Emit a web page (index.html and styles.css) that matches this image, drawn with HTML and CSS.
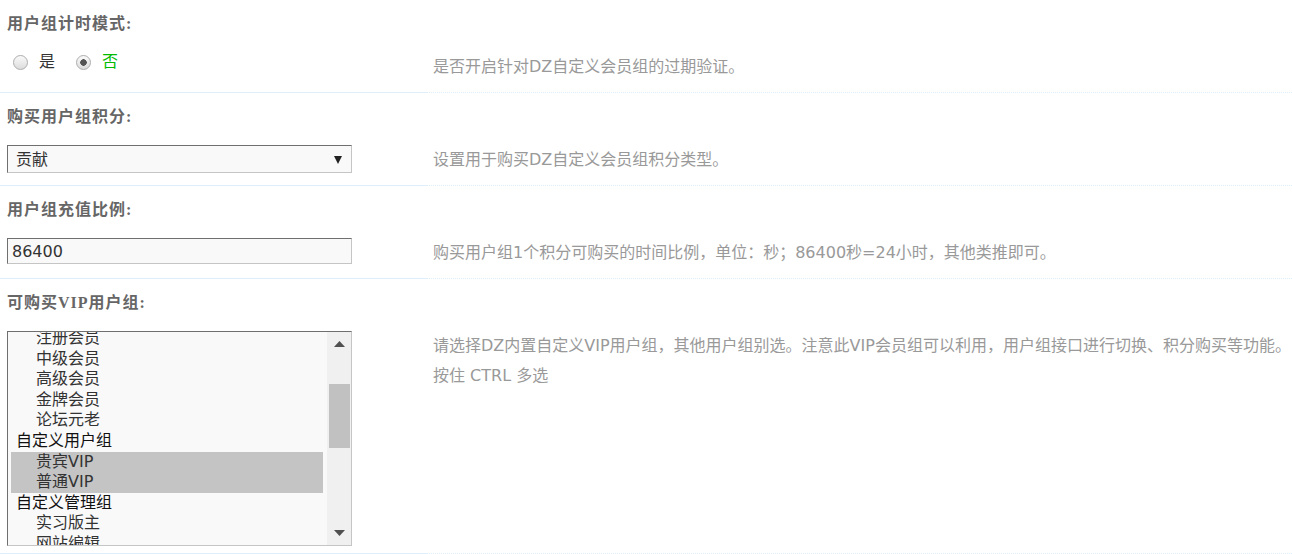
FILE: index.html
```html
<html>
	<head>
		<meta charset="utf-8">
		<link rel="stylesheet" href="styles.css">
	</head>
	<body>
		<form class="settings" method="POST">
			<div class="setting">
				<div class="setting-title">用户组计时模式:</div>
				<div class="setting-row">
					<div class="setting-value">
						<div class="radio-group">
							<label class="radio"><input type="radio" name="timeMode" value="1"/>是</label>
							<label class="radio checked"><input type="radio" name="timeMode" value="0" checked/>否</label>
						</div>
					</div>
					<div class="setting-tip">是否开启针对DZ自定义会员组的过期验证。</div>
				</div>
			</div>
			<div class="setting">
				<div class="setting-title">购买用户组积分:</div>
				<div class="setting-row">
					<div class="setting-value">
						<div class="select-wrap">
							<select name="credit">
								<option>贡献</option>
								<option>威望</option>
								<option>金钱</option>
							</select>
							<svg class="select-arrow" width="8" height="8" viewBox="0 0 8 8"><polygon points="0,0 8,0 4,8" fill="#222"/></svg>
						</div>
					</div>
					<div class="setting-tip">设置用于购买DZ自定义会员组积分类型。</div>
				</div>
			</div>
			<div class="setting">
				<div class="setting-title">用户组充值比例:</div>
				<div class="setting-row">
					<div class="setting-value">
						<input class="textbox" type="text" name="ratio" value="86400"/>
					</div>
					<div class="setting-tip">购买用户组1个积分可购买的时间比例，单位：秒；86400秒=24小时，其他类推即可。</div>
				</div>
			</div>
			<div class="setting">
				<div class="setting-title">可购买VIP用户组:</div>
				<div class="setting-row">
					<div class="setting-value">
						<div class="listbox">
							<div class="listbox-items">
								<div class="opt">注册会员</div>
								<div class="opt">中级会员</div>
								<div class="opt">高级会员</div>
								<div class="opt">金牌会员</div>
								<div class="opt">论坛元老</div>
								<div class="optgroup">自定义用户组</div>
								<div class="opt selected">贵宾VIP</div>
								<div class="opt selected">普通VIP</div>
								<div class="optgroup">自定义管理组</div>
								<div class="opt">实习版主</div>
								<div class="opt">网站编辑</div>
							</div>
							<div class="scrollbar">
								<div class="sb-btn"><svg width="11" height="6" viewBox="0 0 11 6"><polygon points="0,6 11,6 5.5,0" fill="#505050"/></svg></div>
								<div class="sb-track"><div class="sb-thumb"></div></div>
								<div class="sb-btn"><svg width="11" height="6" viewBox="0 0 11 6"><polygon points="0,0 11,0 5.5,6" fill="#505050"/></svg></div>
							</div>
						</div>
					</div>
					<div class="setting-tip">请选择DZ内置自定义VIP用户组，其他用户组别选。注意此VIP会员组可以利用，用户组接口进行切换、积分购买等功能。<br>按住 CTRL 多选</div>
				</div>
			</div>
		</form>
	</body>
</html>
```

FILE: styles.css
```css
body {
	margin: 0;
	background-color: #fff;
	font-family: "DejaVu Sans", "Noto Sans CJK SC", sans-serif;
	font-size: 16px;
	color: #333;
}
.setting-title {
	height: 46px;
	box-sizing: border-box;
	padding: 14px 7px 0;
	line-height: 20px;
	font-family: "Liberation Serif", "Noto Sans CJK SC", serif;
	font-weight: bold;
	letter-spacing: 1px;
	color: #666;
}
.setting-row {
	display: flex;
}
.setting-value {
	flex-shrink: 0;
	width: 426px;
	min-height: 47px;
	box-sizing: border-box;
	padding: 6px 7px 7px;
	border-bottom: 1px solid #deeffb;
}
.setting-tip {
	flex: 1;
	min-width: 0;
	padding: 6px 7px 0;
	line-height: 30px;
	color: #999;
	white-space: nowrap;
	border-bottom: 1px dotted #deeffb;
}
.radio-group {
	display: flex;
	align-items: center;
	height: 20px;
}
.radio {
	display: flex;
	align-items: center;
	line-height: 20px;
	color: #333;
}
.radio + .radio {
	margin-left: 21px;
}
.radio.checked {
	color: #0b0;
}
.radio input {
	appearance: none;
	-webkit-appearance: none;
	width: 15px;
	height: 15px;
	margin: 0 11px 0 0;
	border: 1px solid #adadad;
	border-radius: 50%;
	background: linear-gradient(to bottom, #fafafa, #dcdcdc);
	box-sizing: border-box;
}
.radio:first-child input {
	margin-left: 6px;
}
.radio input:checked {
	background: radial-gradient(circle, #555 0, #555 3px, transparent 3.5px), linear-gradient(to bottom, #fafafa, #dcdcdc);
}
.select-wrap {
	position: relative;
	width: 345px;
	height: 28px;
}
.select-wrap select {
	appearance: none;
	-webkit-appearance: none;
	width: 100%;
	height: 28px;
	margin: 0;
	padding: 0 0 0 8px;
	box-sizing: border-box;
	border: 1px solid;
	border-color: #6f6f6f #c5c5c5 #c5c5c5 #6f6f6f;
	border-radius: 0;
	background-color: #f9f9f9;
	font-family: "DejaVu Sans", "Noto Sans CJK SC", sans-serif;
	font-size: 16px;
	color: #333;
}
.select-arrow {
	position: absolute;
	right: 10px;
	top: 11px;
}
.textbox {
	display: block;
	width: 345px;
	height: 26px;
	margin: 0;
	padding: 0 4px;
	box-sizing: border-box;
	border: 1px solid;
	border-color: #6f6f6f #c5c5c5 #c5c5c5 #6f6f6f;
	background-color: #f9f9f9;
	font-family: "DejaVu Sans", "Noto Sans CJK SC", sans-serif;
	font-size: 16px;
	color: #333;
}
.listbox {
	display: flex;
	width: 345px;
	height: 215px;
	box-sizing: border-box;
	border: 1px solid;
	border-color: #6f6f6f #c5c5c5 #c5c5c5 #6f6f6f;
	background-color: #f9f9f9;
	overflow: hidden;
}
.listbox-items {
	flex: 1;
	margin-top: -4px;
	padding: 0 4px 0 3px;
}
.opt {
	line-height: 20.6px;
	padding-left: 25px;
	color: #333;
}
.opt.selected {
	background-color: #c4c4c4;
}
.optgroup {
	line-height: 20.6px;
	padding-left: 5px;
	color: #111;
}
.scrollbar {
	display: flex;
	flex-direction: column;
	width: 24px;
	background-color: #f0f0f0;
}
.sb-btn {
	display: flex;
	align-items: center;
	justify-content: center;
	height: 24px;
}
.sb-track {
	flex: 1;
}
.sb-thumb {
	height: 64px;
	margin: 28px 1px 0 2px;
	background-color: #c1c1c1;
}
```
